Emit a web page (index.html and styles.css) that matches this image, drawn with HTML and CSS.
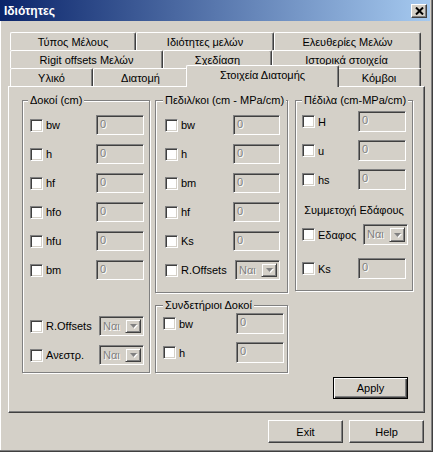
FILE: index.html
```html
<!DOCTYPE html>
<html lang="el">
<head>
<meta charset="utf-8">
<title>Ιδιότητες</title>
<link rel="stylesheet" href="styles.css">
</head>
<body>
<div class="window">
  <div class="titlebar">
    <span class="title">Ιδιότητες</span>
    <span class="close"><svg width="9" height="8" viewBox="0 0 9 8"><path d="M1 0.5 L8 7.5 M8 0.5 L1 7.5" stroke="#000" stroke-width="2"/></svg></span>
  </div>
  <div class="client">
    <div class="tabs">
      <div class="tabrow r1">
        <div class="tab">Τύπος Μέλους</div>
        <div class="tab">Ιδιότητες μελών</div>
        <div class="tab">Ελευθερίες Μελών</div>
      </div>
      <div class="tabrow r2">
        <div class="tab">Rigit offsets Μελών</div>
        <div class="tab">Σχεδίαση</div>
        <div class="tab">Ιστορικά στοιχεία</div>
      </div>
      <div class="tabrow r3">
        <div class="tab">Υλικό</div>
        <div class="tab">Διατομή</div>
        <div class="tab active">Στοιχεία Διατομής</div>
        <div class="tab">Κόμβοι</div>
      </div>
    </div>
    <div class="panel">
      <div class="group g1">
        <span class="legend">Δοκοί (cm)</span>
        <div class="row"><span class="cb"></span><span class="lbl">bw</span><span class="field">0</span></div>
        <div class="row"><span class="cb"></span><span class="lbl">h</span><span class="field">0</span></div>
        <div class="row"><span class="cb"></span><span class="lbl">hf</span><span class="field">0</span></div>
        <div class="row"><span class="cb"></span><span class="lbl">hfo</span><span class="field">0</span></div>
        <div class="row"><span class="cb"></span><span class="lbl">hfu</span><span class="field">0</span></div>
        <div class="row"><span class="cb"></span><span class="lbl">bm</span><span class="field">0</span></div>
        <div class="row push"><span class="cb"></span><span class="lbl">R.Offsets</span><span class="combo"><span class="ctxt">Ναι</span><span class="cbtn"><svg width="7" height="4" viewBox="0 0 7 4"><polygon points="0,0 7,0 3.5,4" fill="#808080"/></svg></span></span></div>
        <div class="row"><span class="cb"></span><span class="lbl">Ανεστρ.</span><span class="combo"><span class="ctxt">Ναι</span><span class="cbtn"><svg width="7" height="4" viewBox="0 0 7 4"><polygon points="0,0 7,0 3.5,4" fill="#808080"/></svg></span></span></div>
      </div>
      <div class="col mid">
        <div class="group g2">
          <span class="legend">Πεδιλ/κοι (cm - MPa/cm)</span>
          <div class="row"><span class="cb"></span><span class="lbl">bw</span><span class="field">0</span></div>
          <div class="row"><span class="cb"></span><span class="lbl">h</span><span class="field">0</span></div>
          <div class="row"><span class="cb"></span><span class="lbl">bm</span><span class="field">0</span></div>
          <div class="row"><span class="cb"></span><span class="lbl">hf</span><span class="field">0</span></div>
          <div class="row"><span class="cb"></span><span class="lbl">Ks</span><span class="field">0</span></div>
          <div class="row"><span class="cb"></span><span class="lbl">R.Offsets</span><span class="combo"><span class="ctxt">Ναι</span><span class="cbtn"><svg width="7" height="4" viewBox="0 0 7 4"><polygon points="0,0 7,0 3.5,4" fill="#808080"/></svg></span></span></div>
        </div>
        <div class="group g3">
          <span class="legend">Συνδετήριοι Δοκοί</span>
          <div class="row"><span class="cb"></span><span class="lbl">bw</span><span class="field">0</span></div>
          <div class="row"><span class="cb"></span><span class="lbl">h</span><span class="field">0</span></div>
        </div>
      </div>
      <div class="col right">
        <div class="group g4">
          <span class="legend">Πέδιλα (cm-MPa/cm)</span>
          <div class="row"><span class="cb"></span><span class="lbl">H</span><span class="field">0</span></div>
          <div class="row"><span class="cb"></span><span class="lbl">u</span><span class="field">0</span></div>
          <div class="row"><span class="cb"></span><span class="lbl">hs</span><span class="field">0</span></div>
          <div class="caption">Συμμετοχή Εδάφους</div>
          <div class="row"><span class="cb"></span><span class="lbl">Εδαφος</span><span class="combo"><span class="ctxt">Ναι</span><span class="cbtn"><svg width="7" height="4" viewBox="0 0 7 4"><polygon points="0,0 7,0 3.5,4" fill="#808080"/></svg></span></span></div>
          <div class="row ks"><span class="cb"></span><span class="lbl">Ks</span><span class="field">0</span></div>
        </div>
        <button class="btn default">Apply</button>
      </div>
    </div>
    <div class="footer">
      <button class="btn">Exit</button>
      <button class="btn">Help</button>
    </div>
  </div>
</div>
</body>
</html>
```
FILE: styles.css
```css
* { box-sizing: border-box; }
html, body { margin: 0; padding: 0; background: #D4D0C8; }
body {
  font-family: "Liberation Sans", Arial, sans-serif;
  font-size: 11px;
  color: #000;
}
.window {
  width: 433px;
  height: 452px;
  background: #D4D0C8;
  display: flex;
  flex-direction: column;
  border-right: 1px solid #404040;
  border-bottom: 1px solid #404040;
  box-shadow: inset -1px -1px 0 #808080, inset 1px 0 0 #fff;
}
.titlebar {
  height: 21px;
  margin-right: 2px;
  background: linear-gradient(to right, #0A246A, #A6CAF0);
  display: flex;
  align-items: center;
  justify-content: space-between;
  padding: 0 3px 0 4px;
}
.title {
  color: #fff;
  font-weight: bold;
  font-size: 12px;
}
.close {
  width: 16px;
  height: 14px;
  background: #D4D0C8;
  border-top: 1px solid #fff;
  border-left: 1px solid #fff;
  border-right: 1px solid #404040;
  border-bottom: 1px solid #404040;
  box-shadow: inset -1px -1px 0 #808080;
  display: flex;
  align-items: center;
  justify-content: center;
}
.client {
  flex: 1;
  padding-top: 11px;
  display: flex;
  flex-direction: column;
}
.tabs {
  margin-left: 10px;
  width: 411px;
}
.tabrow {
  display: grid;
  height: 18px;
}
.r1 { grid-template-columns: 126px 138px 147px; }
.r2 { grid-template-columns: 153px 109px 149px; }
.r3 { grid-template-columns: 83px 95px 149px 84px; }
.tab {
  background: #D4D0C8;
  border-top: 1px solid #fff;
  border-left: 1px solid #fff;
  border-right: 1px solid #404040;
  box-shadow: inset -1px 0 0 #808080;
  border-top-left-radius: 2px;
  border-top-right-radius: 2px;
  display: flex;
  align-items: center;
  justify-content: center;
  white-space: nowrap;
}
.tab.active {
  position: relative;
  z-index: 2;
  margin: -3px -2px -1px -2px;
  padding-bottom: 3px;
}
.panel {
  position: relative;
  z-index: 1;
  margin-left: 8px;
  width: 417px;
  height: 327px;
  border-top: 1px solid #fff;
  border-left: 1px solid #fff;
  border-right: 1px solid #404040;
  border-bottom: 1px solid #404040;
  box-shadow: inset -1px -1px 0 #808080;
  padding: 13px 0 0 13px;
  display: flex;
  align-items: flex-start;
}
.col {
  display: flex;
  flex-direction: column;
}
.mid { margin-left: 5px; width: 133px; }
.right { margin-left: 7px; width: 118px; align-items: flex-end; }
.group {
  position: relative;
  border: 1px solid #808080;
  box-shadow: inset 1px 1px 0 #fff, 1px 1px 0 #fff;
  display: flex;
  flex-direction: column;
  gap: 9px;
}
.legend {
  position: absolute;
  top: -7px;
  left: 5px;
  background: #D4D0C8;
  padding: 0 2px;
  line-height: 13px;
  white-space: nowrap;
}
.g2 .legend, .g3 .legend { left: 7px; }
.g4 .legend { left: 6px; }
.g1 {
  width: 128px;
  height: 273px;
  padding: 14px 5px 7px 7px;
}
.g2 {
  width: 133px;
  height: 193px;
  padding: 14px 7px 0 9px;
}
.g3 {
  margin-top: 12px;
  width: 133px;
  height: 68px;
  padding: 7px 3px 0 7px;
  gap: 8px;
}
.g4 {
  width: 118px;
  height: 191px;
  padding: 10px 6px 0 6px;
  gap: 8px;
  align-self: stretch;
}
.push { margin-top: auto; }
.row {
  display: flex;
  align-items: center;
  height: 20px;
}
.g3 .row, .g4 .row { height: 21px; }
.cb {
  flex: none;
  width: 13px;
  height: 13px;
  background: #fff;
  border-top: 1px solid #808080;
  border-left: 1px solid #808080;
  border-right: 1px solid #fff;
  border-bottom: 1px solid #fff;
  box-shadow: inset 1px 1px 0 #404040, inset -1px -1px 0 #D4D0C8;
}
.lbl {
  flex: 1;
  margin-left: 3px;
  white-space: nowrap;
}
.field, .combo {
  flex: none;
  height: 100%;
  background: #D4D0C8;
  border-top: 1px solid #808080;
  border-left: 1px solid #808080;
  border-right: 1px solid #fff;
  border-bottom: 1px solid #fff;
  box-shadow: inset 1px 1px 0 #404040, inset -1px -1px 0 #D4D0C8;
  color: #808080;
  text-shadow: 1px 1px 0 #fff;
}
.field {
  width: 48px;
  padding: 2px 0 0 3px;
  line-height: 13px;
}
.g2 .field { width: 47px; }
.combo {
  width: 45px;
  display: flex;
  align-items: center;
  justify-content: space-between;
  padding: 2px 2px 2px 3px;
}
.ctxt { line-height: 13px; }
.cbtn {
  width: 16px;
  height: 100%;
  background: #D4D0C8;
  border-top: 1px solid #D4D0C8;
  border-left: 1px solid #D4D0C8;
  border-right: 1px solid #404040;
  border-bottom: 1px solid #404040;
  box-shadow: inset 1px 1px 0 #fff, inset -1px -1px 0 #808080;
  display: flex;
  align-items: center;
  justify-content: center;
}
.cbtn svg { filter: drop-shadow(1px 1px 0 #fff); }
.caption {
  text-align: center;
  margin-top: 6px;
  line-height: 13px;
  margin-bottom: -1px;
}
.g4 .ks { margin-top: 5px; }
.g4 .ks .field { margin-right: 0; }
.g4 .combo { margin-right: -2px; }
.btn {
  width: 75px;
  height: 23px;
  background: #D4D0C8;
  border-top: 1px solid #fff;
  border-left: 1px solid #fff;
  border-right: 1px solid #404040;
  border-bottom: 1px solid #404040;
  box-shadow: inset -1px -1px 0 #808080;
  font-family: "Liberation Sans", Arial, sans-serif;
  font-size: 11px;
  color: #000;
  padding: 0;
  margin: 0;
}
.btn.default {
  height: 22px;
  margin-top: 86px;
  margin-right: 5px;
  border: 1px solid #000;
  box-shadow: inset 1px 1px 0 #fff, inset -1px -1px 0 #404040, inset -2px -2px 0 #808080;
}
.footer {
  display: flex;
  justify-content: flex-end;
  gap: 6px;
  padding-right: 8px;
  margin-top: 7px;
}
```
